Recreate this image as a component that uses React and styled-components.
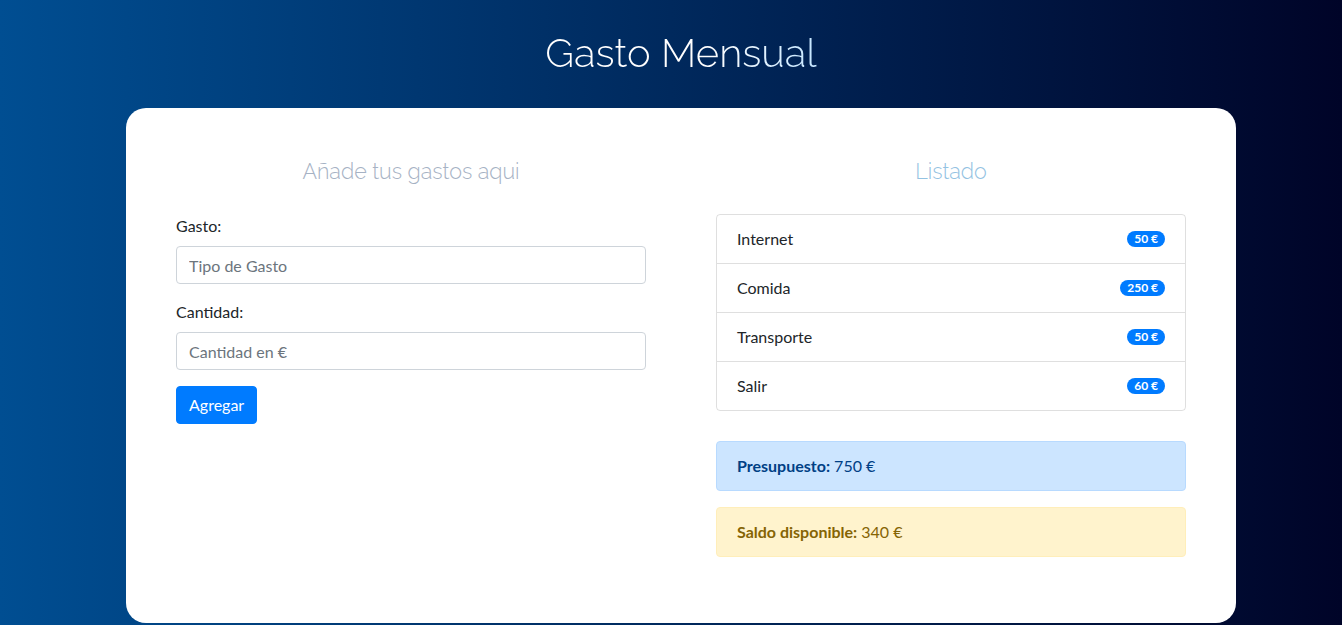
import React from "react";
import styled, { createGlobalStyle } from "styled-components";

const GlobalStyle = createGlobalStyle`
  html, body {
    margin: 0;
    padding: 0;
  }
  body {
    min-height: 100vh;
    background: linear-gradient(to right, #004e92, #000428);
    font-family: Lato, "Open Sans", Arial, sans-serif;
    font-size: 16px;
    line-height: 1.5;
    color: #212529;
  }
`;

const Page = styled.div`
  padding-left: 20px;
  padding-bottom: 40px;
`;

const Container = styled.div`
  width: 1110px;
  margin: 0 auto;
`;

const Title = styled.h1`
  margin: 29px auto 31px;
  font-family: Raleway, Lato, "Open Sans", sans-serif;
  font-weight: 300;
  font-size: 40px;
  line-height: 48px;
  text-align: center;
  background: linear-gradient(to right, #ffffff 60%, #c4e6ff);
  -webkit-background-clip: text;
  background-clip: text;
  color: transparent;
  width: fit-content;
`;

const Card = styled.main`
  background: #fff;
  border-radius: 20px;
  padding: 50px;
  display: grid;
  grid-template-columns: 470px 470px;
  column-gap: 70px;
  align-items: start;
`;

const Column = styled.section`
  display: flex;
  flex-direction: column;
`;

const Heading = styled.h2`
  margin: 0 0 28px;
  font-family: Raleway, Lato, "Open Sans", sans-serif;
  font-weight: 300;
  font-size: 21.5px;
  line-height: 28px;
  text-align: center;
  color: ${(p) => p.$tone};
`;

const Field = styled.div`
  display: flex;
  flex-direction: column;
  margin-bottom: 16px;
`;

const Label = styled.label`
  margin-bottom: 8px;
  line-height: 24px;
`;

const Input = styled.input`
  height: 38px;
  box-sizing: border-box;
  padding: 6px 12px;
  border: 1px solid #ced4da;
  border-radius: 4px;
  font-family: inherit;
  font-size: 16px;
  color: #495057;
  &::placeholder {
    color: #6c757d;
  }
`;

const Button = styled.button`
  align-self: flex-start;
  height: 38px;
  padding: 6px 12px;
  border: 1px solid #007bff;
  border-radius: 4px;
  background: #007bff;
  color: #fff;
  font-family: inherit;
  font-size: 16px;
  line-height: 24px;
`;

const List = styled.ul`
  margin: 0 0 30px;
  padding: 0;
  list-style: none;
  border: 1px solid rgba(0, 0, 0, 0.125);
  border-radius: 4px;
`;

const Item = styled.li`
  display: flex;
  justify-content: space-between;
  align-items: center;
  padding: 12px 20px;
  line-height: 24px;
  & + & {
    border-top: 1px solid rgba(0, 0, 0, 0.125);
  }
`;

const Badge = styled.span`
  background: #007bff;
  color: #fff;
  font-weight: 700;
  font-size: 12px;
  line-height: 12px;
  padding: 2px 7px;
  border-radius: 10rem;
`;

const tones = {
  primary: { bg: "#cce5ff", border: "#b8daff", color: "#004085" },
  warning: { bg: "#fff3cd", border: "#ffeeba", color: "#856404" },
};

const Alert = styled.div`
  margin-bottom: 16px;
  padding: 12px 20px;
  line-height: 24px;
  border-radius: 4px;
  background: ${(p) => tones[p.$kind].bg};
  border: 1px solid ${(p) => tones[p.$kind].border};
  color: ${(p) => tones[p.$kind].color};
  strong {
    font-weight: 700;
  }
`;

const gastos = [
  { id: 1, nombre: "Internet", cantidad: 50 },
  { id: 2, nombre: "Comida", cantidad: 250 },
  { id: 3, nombre: "Transporte", cantidad: 50 },
  { id: 4, nombre: "Salir", cantidad: 60 },
];

export default function App() {
  return (
    <Page>
      <GlobalStyle />
      <Container>
        <Title>Gasto Mensual</Title>
        <Card>
          <Column>
            <Heading $tone="#a6b2c4">Añade tus gastos aqui</Heading>
            <Field>
              <Label>Gasto:</Label>
              <Input type="text" placeholder="Tipo de Gasto" />
            </Field>
            <Field>
              <Label>Cantidad:</Label>
              <Input type="number" placeholder="Cantidad en €" />
            </Field>
            <Button type="button">Agregar</Button>
          </Column>
          <Column>
            <Heading $tone="#93c2e2">Listado</Heading>
            <List>
              {gastos.map((g) => (
                <Item key={g.id}>
                  {g.nombre}
                  <Badge>{g.cantidad} €</Badge>
                </Item>
              ))}
            </List>
            <Alert $kind="primary">
              <strong>Presupuesto:</strong> 750 €
            </Alert>
            <Alert $kind="warning">
              <strong>Saldo disponible:</strong> 340 €
            </Alert>
          </Column>
        </Card>
      </Container>
    </Page>
  );
}
